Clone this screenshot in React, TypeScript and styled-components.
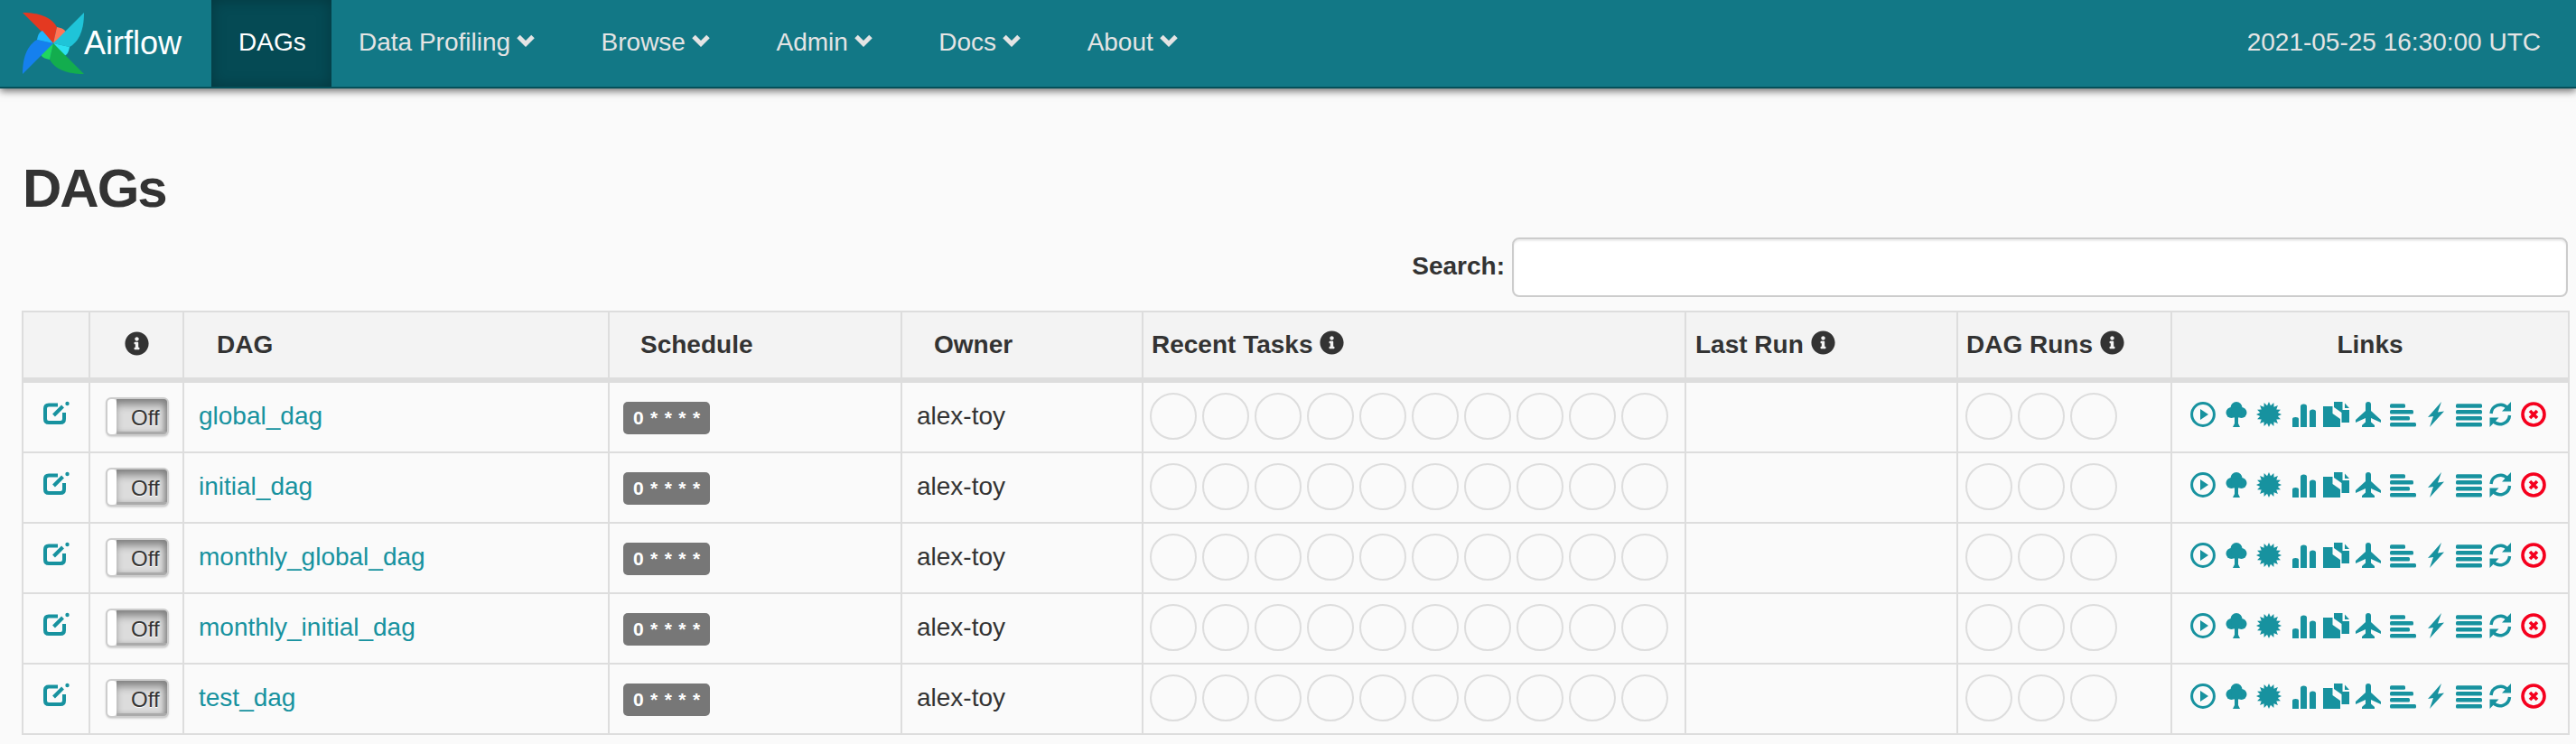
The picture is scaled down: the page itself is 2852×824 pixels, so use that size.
import React from "react";
import styled, { createGlobalStyle } from "styled-components";
import { FaInfoCircle } from "react-icons/fa";

const GlobalStyle = createGlobalStyle`
  html, body {
    margin: 0;
    padding: 0;
    background: #fafafa;
    color: #333;
    font-family: "Liberation Sans", Arial, sans-serif;
    font-size: 28px;
    line-height: 40px;
  }
`;

const Navbar = styled.nav`
  display: flex;
  align-items: stretch;
  height: 96px;
  background: #127886;
  border-bottom: 2px solid #05505a;
  box-shadow: 0 3px 8px rgba(0, 0, 0, 0.55);
`;

const Brand = styled.a`
  display: flex;
  align-items: center;
  width: 234px;
  padding-left: 25px;
  box-sizing: border-box;
  color: #fff;
  font-size: 36px;
`;

const NavItem = styled.a<{ $active?: boolean; $caret?: boolean }>`
  display: flex;
  align-items: center;
  gap: 3px;
  padding: 0 ${(p) => (p.$caret ? "39.5px" : "28.3px")} 3px 30px;
  color: ${(p) => (p.$active ? "#fff" : "#e4e4e4")};
  background: ${(p) => (p.$active ? "#054a54" : "transparent")};
  box-shadow: ${(p) => (p.$active ? "inset 0 0 16px rgba(0, 0, 0, 0.25)" : "none")};
`;

const Clock = styled.div`
  display: flex;
  align-items: center;
  margin-left: auto;
  padding: 0 39px 3px 0;
  color: #e4e4e4;
`;

const Main = styled.main`
  padding: 0 9px 0 24px;
`;

const Heading = styled.h1`
  margin: 78px 0 0;
  padding-left: 1px;
  font-size: 60px;
  line-height: 66px;
  font-weight: 700;
  letter-spacing: -2px;
  color: #333;
`;

const SearchRow = styled.div`
  display: flex;
  justify-content: flex-end;
  align-items: center;
  gap: 8px;
  margin: 21px 0 15px;
`;

const SearchLabel = styled.label`
  margin-top: -2px;
  font-weight: 700;
`;

const SearchInput = styled.input`
  width: 1169px;
  height: 66px;
  box-sizing: border-box;
  background: #fff;
  border: 2px solid #ccc;
  border-radius: 8px;
  box-shadow: inset 0 2px 2px rgba(0, 0, 0, 0.08);
`;

const Table = styled.table`
  width: 2819px;
  table-layout: fixed;
  border-collapse: collapse;
  border: 2px solid #ddd;
`;

const HeadCell = styled.th<{ $pad?: number; $center?: boolean }>`
  height: 72px;
  padding: 0 0 0 ${(p) => p.$pad ?? 0}px;
  background: #f3f3f3;
  border: 2px solid #ddd;
  border-bottom: 6px solid #ddd;
  text-align: ${(p) => (p.$center ? "center" : "left")};
  font-weight: 700;
  vertical-align: middle;
`;

const InfoIcon = styled(FaInfoCircle)`
  width: 27px;
  height: 27px;
  margin-left: 8px;
  vertical-align: -2px;
  color: #333;
`;

const BareInfo = styled(InfoIcon)`
  margin-left: 0;
  vertical-align: -3px;
`;

const Cell = styled.td<{ $pad?: number; $center?: boolean }>`
  height: 74px;
  padding: 0 0 2px ${(p) => p.$pad ?? 0}px;
  border: 2px solid #ddd;
  text-align: ${(p) => (p.$center ? "center" : "left")};
  vertical-align: middle;
`;

const DagLink = styled.a`
  color: #17929f;
`;

const Toggle = styled.span`
  display: flex;
  width: 70px;
  height: 43px;
  margin-left: 17px;
  box-sizing: border-box;
  border: 2px solid #cdcdcd;
  border-radius: 6px;
  overflow: hidden;
  background: #dcdcdc;
  box-shadow: 0 1px 2px rgba(0, 0, 0, 0.15);
`;

const ToggleHandle = styled.span`
  width: 10px;
  background: #fff;
  border-radius: 4px;
`;

const ToggleBody = styled.span`
  flex: 1;
  padding: 4px 0 0 16px;
  font-size: 24px;
  line-height: 34px;
  color: #333;
  text-shadow: 0 1px 0 #fff;
  border-bottom: 3px solid #aaa;
  box-shadow: inset 0 8px 10px -2px #808080, inset -5px 0 6px -2px #909090;
`;

const CronBadge = styled.span`
  display: inline-block;
  width: 96px;
  height: 36px;
  padding-left: 11px;
  box-sizing: border-box;
  border-radius: 5px;
  background: #777;
  color: #fff;
  font-size: 21px;
  line-height: 36px;
  font-weight: 700;
  letter-spacing: 0.8px;
  white-space: pre;
`;

const Dots = styled.div`
  display: flex;
  gap: 6px;
`;

const Dot = styled.span`
  width: 52px;
  height: 52px;
  box-sizing: border-box;
  border: 2px solid #ddd;
  border-radius: 50%;
`;

const LinkIcons = styled.div`
  display: flex;
  justify-content: center;
  gap: 8.6px;
  padding: 0 4px 4px 0;
  color: #17929f;
`;

const Glyph = styled.svg<{ $red?: boolean }>`
  width: 28px;
  height: 28px;
  overflow: visible;
  flex: none;
  fill: currentColor;
  color: ${(p) => (p.$red ? "#f5001e" : "inherit")};
`;

const EditGlyph = styled.svg`
  display: block;
  width: 29px;
  height: 25px;
  margin: -7px 0 0 22px;
  overflow: visible;
  color: #17929f;
`;

const Caret = styled.svg`
  width: 28px;
  height: 16px;
  margin-top: -3px;
`;

const Pinwheel = styled.svg`
  width: 68px;
  height: 68px;
  flex: none;
`;

const navItems = ["Data Profiling", "Browse", "Admin", "Docs", "About"];
const dags = ["global_dag", "initial_dag", "monthly_global_dag", "monthly_initial_dag", "test_dag"];

const blades = [
  { angle: 0, main: "#e43921", lobe: "#ff7557" },
  { angle: 90, main: "#1fc4d8", lobe: "#2be0f0" },
  { angle: 180, main: "#13ad4e", lobe: "#1fd65f" },
  { angle: 270, main: "#1580ee", lobe: "#1fb6ff" },
];

const starPoints = Array.from({ length: 32 }, (_, i) => {
  const r = i % 2 === 0 ? 14 : 10;
  const a = (Math.PI * i) / 16;
  return `${(14 + r * Math.sin(a)).toFixed(2)},${(14 - r * Math.cos(a)).toFixed(2)}`;
}).join(" ");

const Logo = () => (
  <Pinwheel viewBox="0 0 68 68">
    {blades.map((b) => (
      <g key={b.angle} transform={`rotate(${b.angle} 34 34)`}>
        <path d="M0 0C12 0 30 2 38 16L34 34Z" fill={b.main} />
        <path d="M38 16C44 17 47 19 48 22L34 34Z" fill={b.lobe} />
      </g>
    ))}
  </Pinwheel>
);

const ChevronDown = () => (
  <Caret viewBox="0 0 28 16">
    <path d="M6 3.5L14 11.5L22 3.5" fill="none" stroke="#e4e4e4" strokeWidth="5" />
  </Caret>
);

const EditIcon = () => (
  <EditGlyph viewBox="0 0 29 25">
    <path
      d="M16 3.5H6Q2 3.5 2 7.5V19Q2 23 6 23H19Q23 23 23 19V12"
      fill="none"
      stroke="currentColor"
      strokeWidth="4"
    />
    <path d="M11.5 15L21.5 5" stroke="currentColor" strokeWidth="4" />
    <circle cx="26.5" cy="2" r="2.2" fill="currentColor" />
  </EditGlyph>
);

const linkGlyphs: React.ReactNode[] = [
  <>
    <circle cx="14" cy="14" r="12.4" fill="none" stroke="currentColor" strokeWidth="3" />
    <path d="M11 8L20 14L11 20Z" />
  </>,
  <>
    <circle cx="14" cy="6.5" r="6.5" />
    <circle cx="8.5" cy="12" r="6" />
    <circle cx="19.5" cy="12" r="6" />
    <circle cx="14" cy="12" r="6" />
    <path d="M12 14H16V24L18 28H10L12 24Z" />
  </>,
  <polygon points={starPoints} />,
  <>
    <path d="M3 28V19Q3 17 6.5 17Q10 17 10 19V28Z" />
    <path d="M12 28V5Q12 2.5 15.5 2.5Q19 2.5 19 5V28Z" />
    <path d="M22 28V11Q22 8.5 25.5 8.5Q29 8.5 29 11V28Z" />
  </>,
  <>
    <path d="M1 5H11.5V13L20 19V28H1Z" />
    <path d="M13 0H22.5V9H30V23H21.5V12L13 6Z" />
    <path d="M25 1.5L30 7H25Z" />
  </>,
  <>
    <rect x="11" y="0" width="6" height="26" rx="3" />
    <path d="M11 10L0 20V23L11 18ZM17 10L28 20V23L17 18Z" />
    <path d="M11.5 22L7 26V28H21V26L16.5 22Z" />
  </>,
  <>
    <rect x="1" y="2.3" width="17" height="4.5" rx="1.5" />
    <rect x="1" y="9" width="26" height="4.5" rx="1.5" />
    <rect x="1" y="16" width="22" height="4.5" rx="1.5" />
    <rect x="1" y="23" width="29" height="4.6" rx="1.5" />
  </>,
  <polygon points="22,0 7,17 13,16 9,28 25,10.5 18,11.5" />,
  <>
    <rect x="1" y="2.3" width="29" height="4.5" rx="1.5" />
    <rect x="1" y="9" width="29" height="4.5" rx="1.5" />
    <rect x="1" y="16" width="29" height="4.5" rx="1.5" />
    <rect x="1" y="23" width="29" height="4.6" rx="1.5" />
  </>,
  <>
    <path d="M4 13A10.5 10.5 0 0 1 22 6.5" fill="none" stroke="currentColor" strokeWidth="3.4" />
    <path d="M26 0V10.5H16Z" />
    <path d="M24.5 15A10.5 10.5 0 0 1 6.5 21.5" fill="none" stroke="currentColor" strokeWidth="3.4" />
    <path d="M2.5 28V17.5H12.5Z" />
  </>,
  <>
    <circle cx="14" cy="14" r="12" fill="none" stroke="currentColor" strokeWidth="3.6" />
    <path d="M10 10L18 18M18 10L10 18" stroke="currentColor" strokeWidth="3.6" />
  </>,
];

const columns = [74, 104, 471, 324, 267, 601, 301, 237, 440];

export default function App() {
  return (
    <>
      <GlobalStyle />
      <Navbar>
        <Brand>
          <Logo />
          Airflow
        </Brand>
        <NavItem $active>DAGs</NavItem>
        {navItems.map((item) => (
          <NavItem key={item} $caret>
            {item}
            <ChevronDown />
          </NavItem>
        ))}
        <Clock>2021-05-25 16:30:00 UTC</Clock>
      </Navbar>
      <Main>
        <Heading>DAGs</Heading>
        <SearchRow>
          <SearchLabel>Search:</SearchLabel>
          <SearchInput />
        </SearchRow>
        <Table>
          <colgroup>
            {columns.map((w, i) => (
              <col key={i} width={w} />
            ))}
          </colgroup>
          <thead>
            <tr>
              <HeadCell />
              <HeadCell $center>
                <BareInfo />
              </HeadCell>
              <HeadCell $pad={36}>DAG</HeadCell>
              <HeadCell $pad={34}>Schedule</HeadCell>
              <HeadCell $pad={35}>Owner</HeadCell>
              <HeadCell $pad={9}>
                Recent Tasks
                <InfoIcon />
              </HeadCell>
              <HeadCell $pad={10}>
                Last Run
                <InfoIcon />
              </HeadCell>
              <HeadCell $pad={9}>
                DAG Runs
                <InfoIcon />
              </HeadCell>
              <HeadCell $center>Links</HeadCell>
            </tr>
          </thead>
          <tbody>
            {dags.map((dag) => (
              <tr key={dag}>
                <Cell>
                  <EditIcon />
                </Cell>
                <Cell>
                  <Toggle>
                    <ToggleHandle />
                    <ToggleBody>Off</ToggleBody>
                  </Toggle>
                </Cell>
                <Cell $pad={16}>
                  <DagLink>{dag}</DagLink>
                </Cell>
                <Cell $pad={15}>
                  <CronBadge>{"0 * * * *"}</CronBadge>
                </Cell>
                <Cell $pad={16}>alex-toy</Cell>
                <Cell $pad={7}>
                  <Dots>
                    {Array.from({ length: 10 }, (_, i) => (
                      <Dot key={i} />
                    ))}
                  </Dots>
                </Cell>
                <Cell />
                <Cell $pad={8}>
                  <Dots>
                    {Array.from({ length: 3 }, (_, i) => (
                      <Dot key={i} />
                    ))}
                  </Dots>
                </Cell>
                <Cell>
                  <LinkIcons>
                    {linkGlyphs.map((g, i) => (
                      <Glyph key={i} viewBox="0 0 28 28" $red={i === linkGlyphs.length - 1}>
                        {g}
                      </Glyph>
                    ))}
                  </LinkIcons>
                </Cell>
              </tr>
            ))}
          </tbody>
        </Table>
      </Main>
    </>
  );
}
